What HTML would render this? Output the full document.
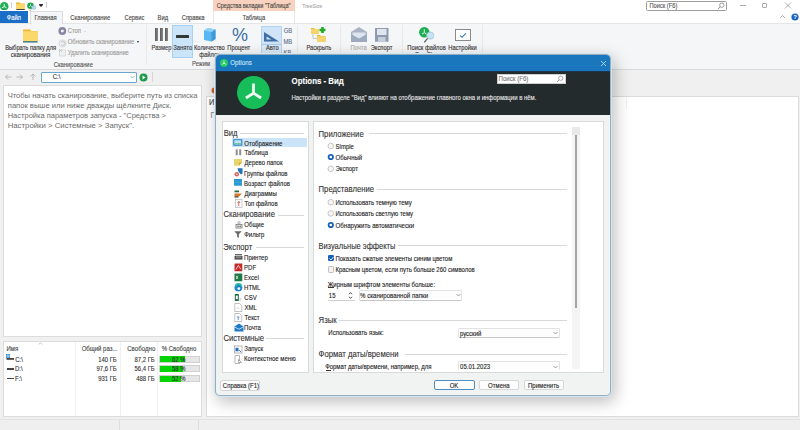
<!DOCTYPE html>
<html><head><meta charset="utf-8">
<style>
*{box-sizing:border-box}
body{margin:0;width:800px;height:430px;position:relative;overflow:hidden;background:#f0f0f0;font-family:"Liberation Sans",sans-serif;color:#222}
.a{position:absolute}
.t{position:absolute;white-space:nowrap;line-height:10px;height:10px;transform:scaleY(1.14);-webkit-text-stroke:0.1px currentColor}
</style></head><body>
<!-- top white area -->
<div class="a" style="left:0;top:0;width:800px;height:23px;background:#fff"></div>
<!-- title row icons -->
<svg class="a" style="left:0;top:1.5px" width="8.5" height="8.5" viewBox="-100 -100 200 200"><circle r="100" fill="#1fae55"/><path d="M0 -58 V6 L-52 36 M0 6 L52 36" stroke="#fff" stroke-width="22" fill="none"/></svg>
<div class="a" style="left:11px;top:2px;width:1px;height:6px;background:#d0d0d0"></div>
<svg class="a" style="left:16px;top:2px" width="9" height="8" viewBox="0 0 9 8"><path d="M0 .5h3.5l1 1H9V7H0z" fill="#f2b630"/><rect x="0" y="2" width="9" height="5" fill="#fcd86a"/><rect x="0.3" y="7" width="8.4" height="1" fill="#444"/></svg>
<svg class="a" style="left:27px;top:2px" width="10" height="9" viewBox="0 0 10 9"><circle cx="3.5" cy="3.7" r="3.3" fill="#1aa553"/><path d="M3.5 1.8v2l-1.4 1M3.5 3.8l1.4 1" stroke="#dfd" stroke-width=".7" fill="none"/><circle cx="6.8" cy="5.6" r="2" fill="#b8d8ea" stroke="#8ab3cf" stroke-width=".5"/><path d="M4 7.5L3 8.8" stroke="#444" stroke-width=".6"/></svg>
<div class="a" style="left:38.5px;top:3.7px;width:4px;height:.8px;background:#333"></div>
<div class="a" style="left:38.5px;top:5px;width:0;height:0;border-left:2px solid transparent;border-right:2px solid transparent;border-top:2.5px solid #222"></div>
<div class="a" style="left:46px;top:2px;width:1px;height:6px;background:#d0d0d0"></div>
<!-- context tab header -->
<div class="a" style="left:213px;top:0;width:82px;height:10.7px;background:#f8d2bf"></div>
<div class="a" style="left:213px;top:10.7px;width:82px;height:12.3px;background:#fff;border-left:1px solid #e6e6e6;border-right:1px solid #e6e6e6"></div>
<!-- search -->
<div class="a" style="left:646px;top:1px;width:81px;height:10px;border:1px solid #9c9c9c;border-radius:1.5px;background:#fff"></div>
<svg class="a" style="left:717px;top:2px" width="8" height="8" viewBox="0 0 8 8"><circle cx="4.8" cy="3.2" r="2.2" fill="none" stroke="#777" stroke-width=".7"/><path d="M3.2 4.8L1 7" stroke="#777" stroke-width=".8"/></svg>
<!-- window controls -->
<div class="a" style="left:740px;top:5px;width:6px;height:1px;background:#aaa"></div>
<div class="a" style="left:762px;top:3px;width:5px;height:5px;border:1px solid #aaa;border-radius:1px"></div>
<svg class="a" style="left:784px;top:2px" width="8" height="7" viewBox="0 0 8 7"><path d="M1 .5L7 6.5M7 .5L1 6.5" stroke="#999" stroke-width=".8"/></svg>
<!-- tab row -->
<div class="a" style="left:0;top:11px;width:28px;height:12px;background:#1b6ec5"></div>
<svg class="a" style="left:779px;top:14px" width="7" height="5" viewBox="0 0 7 5"><path d="M1 4L3.5 1.5 6 4" stroke="#888" stroke-width=".7" fill="none"/></svg>
<svg class="a" style="left:791px;top:13px" width="8" height="8" viewBox="0 0 8 8"><circle cx="4" cy="4" r="3.6" fill="#1565c0"/><text x="4" y="6.3" font-size="6" font-weight="700" fill="#fff" text-anchor="middle" font-family="Liberation Sans">?</text></svg>
<!-- ribbon -->
<div class="a" style="left:0;top:23px;width:800px;height:47px;background:#f5f6f7;border-top:1px solid #e4e5e6;border-bottom:1px solid #d9dadb"></div>
<div class="a" style="left:30px;top:10.5px;width:33px;height:13.5px;background:#f5f6f7;border:1px solid #dadbdc;border-bottom:none"></div>
<!-- group separators -->
<div class="a" style="left:146px;top:25px;width:1px;height:40px;background:#e8e9ea"></div>
<div class="a" style="left:297px;top:25px;width:1px;height:40px;background:#e8e9ea"></div>
<div class="a" style="left:340px;top:25px;width:1px;height:40px;background:#e8e9ea"></div>
<div class="a" style="left:402px;top:25px;width:1px;height:40px;background:#e8e9ea"></div>
<div class="a" style="left:482px;top:25px;width:1px;height:40px;background:#e8e9ea"></div>
<!-- big folder -->
<svg class="a" style="left:23px;top:28.5px" width="15" height="14" viewBox="0 0 15 14"><path d="M0 .5h7l1.2 1.5H14.5V12.5H0z" fill="#f2b630"/><rect x="0" y="2.2" width="14.5" height="10" fill="#fcd86a"/><rect x="0" y="12.2" width="14.5" height="1.3" fill="#2a6f7f"/></svg>
<!-- stop / refresh / delete icons -->
<svg class="a" style="left:58px;top:27px" width="9" height="9" viewBox="0 0 9 9"><circle cx="4.3" cy="4" r="3.9" fill="#8986a4"/><rect x="3" y="2.7" width="2.6" height="2.6" fill="#f4f4f8" rx=".5"/></svg>
<div class="a" style="left:83.5px;top:30.5px;width:0;height:0;border-left:1.5px solid transparent;border-right:1.5px solid transparent;border-top:1.5px solid #bbb"></div>
<svg class="a" style="left:58px;top:38.5px" width="9" height="9" viewBox="0 0 9 9"><circle cx="4.5" cy="4.5" r="3.6" fill="#eef0f2" stroke="#c8cacc" stroke-width=".6"/><path d="M3 3.5a2 2 0 1 1 0 2" stroke="#aaa" stroke-width=".6" fill="none"/></svg>
<div class="a" style="left:136.5px;top:40.7px;width:0;height:0;border-left:1.7px solid transparent;border-right:1.7px solid transparent;border-top:2px solid #222"></div>
<svg class="a" style="left:58px;top:48px" width="9" height="9" viewBox="0 0 9 9"><rect x="1.5" y="2" width="6" height="6" fill="#eef0f2" stroke="#c8cacc" stroke-width=".6"/><path d="M1 1l3 3M4 1L1 4" stroke="#bbb" stroke-width=".6"/></svg>
<!-- Размер bars -->
<div class="a" style="left:154.5px;top:28px;width:3.3px;height:12.5px;background:linear-gradient(90deg,#5a5a5a,#8a8a8a)"></div>
<div class="a" style="left:159.5px;top:28px;width:3.3px;height:12.5px;background:linear-gradient(90deg,#5a5a5a,#8a8a8a)"></div>
<div class="a" style="left:164.5px;top:28px;width:3.3px;height:12.5px;background:linear-gradient(90deg,#5a5a5a,#8a8a8a)"></div>
<!-- Занято selected -->
<div class="a" style="left:172px;top:25px;width:21px;height:33px;background:#cce4f7;border:1px solid #a8d0f0"></div>
<div class="a" style="left:175.5px;top:34.5px;width:13.5px;height:3.5px;background:#2f3a36;border-radius:.5px"></div>
<!-- cube -->
<svg class="a" style="left:203.5px;top:28px" width="12" height="14" viewBox="0 0 12 14"><path d="M0 2.5L4 0 11.5 1.5V11L7.5 13.5 0 12z" fill="#5ab6f0"/><path d="M7.5 4V13.5L11.5 11V1.5z" fill="#3d9ad8"/><path d="M0 2.5L4 0 11.5 1.5 7.5 4z" fill="#8fd0f8"/></svg>
<!-- percent -->
<svg class="a" style="left:232px;top:27.5px" width="16" height="14" viewBox="0 0 16 14"><text x="8" y="13.2" font-size="18" font-weight="400" fill="#3a6ea5" text-anchor="middle" font-family="Liberation Sans">%</text></svg>
<!-- Авто split -->
<div class="a" style="left:261px;top:25.5px;width:21px;height:19px;background:#cfe4f6;border:1px solid #b3d3ee"></div>
<div class="a" style="left:261px;top:44px;width:21px;height:12px;background:#d8e9f7;border:1px solid #b3d3ee;border-top:1px solid #a9cbe9"></div>
<svg class="a" style="left:263.5px;top:31.5px" width="15" height="10" viewBox="0 0 15 10"><path d="M0 0V9.5H15z" fill="#3f6ea8"/><path d="M2.5 4.5V7.5H7.5z" fill="#cfe4f6"/></svg>
<!-- раскрыть -->
<svg class="a" style="left:311px;top:26.5px" width="16" height="16" viewBox="0 0 16 16"><path d="M0 1h3l1 1h4v5H0z" fill="#e9b83a"/><rect x="0" y="2" width="8" height="5" fill="#f6d26a"/><path d="M2 7v4.5h4" stroke="#aaa" stroke-width=".6" fill="none"/><path d="M6 8h3l1 1h4.5v6H6z" fill="#e9b83a"/><rect x="6" y="9.3" width="8.5" height="5.7" fill="#f6d26a"/><path d="M8.5 3h6M11.5 0v6" stroke="#22aa22" stroke-width="2.6"/></svg>
<!-- почта -->
<svg class="a" style="left:351px;top:27px" width="16" height="15" viewBox="0 0 16 15"><path d="M0 5L8 0 16 5V15H0z" fill="#aab4c6"/><path d="M1.5 5.5H14.5V9L8 12.5 1.5 9z" fill="#dfe5ee"/><path d="M0 7L8 11.5 16 7V15H0z" fill="#9eaabe"/></svg>
<!-- экспорт floppy -->
<svg class="a" style="left:374.5px;top:28px" width="14" height="14" viewBox="0 0 14 14"><rect x="0" y="0" width="13.5" height="13.8" fill="#8e9aae" rx=".6"/><rect x="2" y="1" width="9.5" height="6" fill="#dfe6f0"/><rect x="3" y="9" width="7.5" height="4.8" fill="#c5cfdc"/></svg>
<!-- поиск в treesize -->
<svg class="a" style="left:418px;top:26.5px" width="18" height="17" viewBox="0 0 18 17"><circle cx="6.3" cy="5.3" r="5.2" fill="#1fae55"/><path d="M6.3 2.3v3.3l-2.3 1.5M6.3 5.6l2.3 1.5" stroke="#dff5e6" stroke-width="1" fill="none"/><circle cx="12.3" cy="8.6" r="3.6" fill="#c6e2f3" stroke="#9cc3dc" stroke-width=".7"/><path d="M9.6 11.3L6.3 15.3" stroke="#555" stroke-width="1.1"/></svg>
<!-- настройки checkbox -->
<div class="a" style="left:455px;top:29px;width:16px;height:12px;background:#fff;border:1px solid #8a8a8a"></div>
<svg class="a" style="left:459px;top:31.5px" width="8" height="7" viewBox="0 0 8 7"><path d="M1.2 3.6L3 5.3 6.8 1.4" stroke="#2a78b4" stroke-width="1.1" fill="none"/></svg>
<!-- small dropdown arrows -->
<div class="a" style="left:317.5px;top:52.5px;width:0;height:0;border-left:1.5px solid transparent;border-right:1.5px solid transparent;border-top:1.8px solid #333"></div>
<div class="a" style="left:380px;top:52.5px;width:0;height:0;border-left:1.5px solid transparent;border-right:1.5px solid transparent;border-top:1.8px solid #333"></div>
<div class="a" style="left:270px;top:52.5px;width:0;height:0;border-left:1.5px solid transparent;border-right:1.5px solid transparent;border-top:1.8px solid #333"></div>
<div class="a" style="left:461px;top:52.5px;width:0;height:0;border-left:1.5px solid transparent;border-right:1.5px solid transparent;border-top:1.8px solid #333"></div>
<div class="a" style="left:441px;top:53.5px;width:0;height:0;border-left:1.5px solid transparent;border-right:1.5px solid transparent;border-top:1.8px solid #333"></div>

<!-- address row -->
<svg class="a" style="left:4px;top:73px" width="34" height="8" viewBox="0 0 34 8"><path d="M1.5 4h6M1.5 4L4 1.5M1.5 4L4 6.5" stroke="#aaa" stroke-width=".8" fill="none"/><path d="M12.5 4h6M18.5 4L16 1.5M18.5 4L16 6.5" stroke="#aaa" stroke-width=".8" fill="none"/><path d="M29 7V1M29 1L26.5 3.5M29 1L31.5 3.5" stroke="#aaa" stroke-width=".8" fill="none"/></svg>
<div class="a" style="left:40.5px;top:71.5px;width:96px;height:11px;background:#fff;border:1px solid #6aa6cf;border-radius:1px"></div>
<svg class="a" style="left:130px;top:75px" width="5" height="4" viewBox="0 0 5 4"><path d="M.5 1L2.5 3 4.5 1" stroke="#777" stroke-width=".6" fill="none"/></svg>
<svg class="a" style="left:139px;top:72.5px" width="9" height="9" viewBox="0 0 9 9"><circle cx="4.5" cy="4.5" r="4" fill="#1f9a4c"/><path d="M3.5 2.5V6.5L6.6 4.5z" fill="#fff"/></svg>
<div class="a" style="left:152px;top:72px;width:1px;height:10px;background:#d6d6d6"></div>

<!-- left text panel -->
<div class="a" style="left:3px;top:85px;width:199px;height:252px;background:#fff;border:1px solid #dcdcdc"></div>
<!-- drive list panel -->
<div class="a" style="left:3px;top:341px;width:199px;height:76px;background:#fff;border:1px solid #dcdcdc"></div>
<svg class="a" style="left:38px;top:342px" width="5" height="3" viewBox="0 0 5 3"><path d="M.5 2.5L2.5 .8 4.5 2.5" stroke="#999" stroke-width=".5" fill="none"/></svg>
<div class="a" style="left:75px;top:342px;width:1px;height:74px;background:#f0f0f0"></div>
<div class="a" style="left:120px;top:342px;width:1px;height:74px;background:#f0f0f0"></div>
<div class="a" style="left:157px;top:342px;width:1px;height:74px;background:#f0f0f0"></div>
<!-- drive icons -->
<svg class="a" style="left:6px;top:354px" width="9" height="8" viewBox="0 0 9 8"><rect x="0" y="0" width="4" height="4" fill="#3b8fd1"/><path d="M0 2h4M2 0v4" stroke="#fff" stroke-width=".5"/><rect x="0.5" y="4" width="7.5" height="1.8" fill="#444"/></svg>
<div class="a" style="left:6.5px;top:367.8px;width:7.5px;height:1.8px;background:#444"></div>
<div class="a" style="left:6.5px;top:377.7px;width:7.5px;height:1.8px;background:#444"></div>
<!-- progress bars -->
<div class="a" style="left:159px;top:355.5px;width:40.5px;height:7px;background:#e6e6e6;border:1px solid #d0d0d0"></div>
<div class="a" style="left:159.5px;top:356px;width:25px;height:6px;background:#06d406"></div>
<div class="a" style="left:159px;top:365.4px;width:40.5px;height:7px;background:#e6e6e6;border:1px solid #d0d0d0"></div>
<div class="a" style="left:159.5px;top:365.9px;width:23.5px;height:6px;background:#06d406"></div>
<div class="a" style="left:159px;top:375.3px;width:40.5px;height:7px;background:#e6e6e6;border:1px solid #d0d0d0"></div>
<div class="a" style="left:159.5px;top:375.8px;width:21px;height:6px;background:#06d406"></div>
<!-- right big panel -->
<div class="a" style="left:206px;top:96px;width:593px;height:321px;background:#fff;border:1px solid #dcdcdc"></div>
<div class="a" style="left:626px;top:97px;width:1px;height:12px;background:#eee"></div>
<svg class="a" style="left:211px;top:87px" width="6" height="7" viewBox="0 0 6 7"><circle cx="3.5" cy="3.5" r="3" fill="#d2622a"/></svg>
<!-- status bar -->
<div class="a" style="left:0;top:419px;width:800px;height:11px;background:#efefef;border-top:1px solid #e2e2e2"></div>
<div class="a" style="left:119px;top:420px;width:1px;height:10px;background:#dedede"></div>
<div class="a" style="left:198px;top:420px;width:1px;height:10px;background:#dedede"></div>

<div class="t" style="left:216.72px;top:0.50px;font-size:5.56px;color:#444;">Средства вкладки "Таблица"</div>
<div class="t" style="left:302.30px;top:1.00px;font-size:5.03px;color:#aaa;">TreeSize</div>
<div class="t" style="left:649.54px;top:0.50px;font-size:5.70px;color:#555;">Поиск (F6)</div>
<div class="t" style="left:6.75px;top:12.80px;font-size:5.80px;color:#fff;">Файл</div>
<div class="t" style="left:34.54px;top:12.50px;font-size:5.80px;color:#444;z-index:3">Главная</div>
<div class="t" style="left:70.30px;top:12.50px;font-size:5.96px;color:#444;">Сканирование</div>
<div class="t" style="left:124.46px;top:12.50px;font-size:5.80px;color:#444;">Сервис</div>
<div class="t" style="left:157.54px;top:12.50px;font-size:5.80px;color:#444;">Вид</div>
<div class="t" style="left:181.71px;top:12.50px;font-size:5.80px;color:#444;">Справка</div>
<div class="t" style="left:242.38px;top:12.50px;font-size:5.80px;color:#444;">Таблица</div>
<div class="t" style="left:5.14px;top:43.25px;font-size:5.76px;color:#333;">Выбрать папку для</div>
<div class="t" style="left:10.65px;top:49.60px;font-size:6.13px;color:#333;">сканирования</div>
<div class="t" style="left:67.71px;top:26.00px;font-size:5.80px;color:#999;">Стоп</div>
<div class="t" style="left:67.70px;top:37.20px;font-size:5.92px;color:#999;">Обновить сканирование</div>
<div class="t" style="left:67.83px;top:48.00px;font-size:5.78px;color:#999;">Удалить сканирование</div>
<div class="t" style="left:53.71px;top:59.70px;font-size:5.85px;color:#555;">Сканирование</div>
<div class="t" style="left:151.54px;top:43.00px;font-size:5.80px;color:#333;">Размер</div>
<div class="t" style="left:173.27px;top:43.00px;font-size:5.80px;color:#333;">Занято</div>
<div class="t" style="left:194.04px;top:43.00px;font-size:5.71px;color:#333;">Количество</div>
<div class="t" style="left:199.27px;top:49.50px;font-size:5.80px;color:#333;">файлов</div>
<div class="t" style="left:227.34px;top:43.00px;font-size:5.80px;color:#333;">Процент</div>
<div class="t" style="left:266.00px;top:43.00px;font-size:5.80px;color:#333;">Авто</div>
<div class="t" style="left:283.71px;top:26.00px;font-size:5.80px;color:#5a6f8a;">GB</div>
<div class="t" style="left:283.54px;top:37.00px;font-size:5.80px;color:#5a6f8a;">MB</div>
<div class="t" style="left:283.54px;top:48.00px;font-size:5.80px;color:#5a6f8a;">KB</div>
<div class="t" style="left:192.04px;top:59.40px;font-size:5.80px;color:#555;">Режим</div>
<div class="t" style="left:306.55px;top:43.00px;font-size:5.63px;color:#333;">Раскрыть</div>
<div class="t" style="left:350.54px;top:43.00px;font-size:5.80px;color:#aaa;">Почта</div>
<div class="t" style="left:370.65px;top:43.00px;font-size:5.80px;color:#333;">Экспорт</div>
<div class="t" style="left:407.29px;top:43.00px;font-size:5.79px;color:#333;">Поиск файлов</div>
<div class="t" style="left:410.59px;top:49.50px;font-size:5.80px;color:#333;">в TreeSize</div>
<div class="t" style="left:448.29px;top:43.00px;font-size:5.80px;color:#333;">Настройки</div>
<div class="t" style="left:7.70px;top:90.50px;font-size:7.55px;color:#6b6b6b;transform:scaleY(1.04);-webkit-text-stroke:0">Чтобы начать сканирование, выберите путь из списка</div>
<div class="t" style="left:7.77px;top:100.50px;font-size:7.60px;color:#6b6b6b;transform:scaleY(1.04);-webkit-text-stroke:0">папок выше или ниже дважды щёлкните Диск.</div>
<div class="t" style="left:7.70px;top:110.50px;font-size:7.50px;color:#6b6b6b;transform:scaleY(1.04);-webkit-text-stroke:0">Настройка параметров запуска - "Средства &gt;</div>
<div class="t" style="left:7.68px;top:120.50px;font-size:7.79px;color:#6b6b6b;transform:scaleY(1.04);-webkit-text-stroke:0">Настройки &gt; Системные &gt; Запуск".</div>
<div class="t" style="left:52.70px;top:72.00px;font-size:6.00px;color:#333;">C:\</div>
<div class="t" style="left:6.52px;top:343.75px;font-size:6.00px;color:#444;">Имя</div>
<div class="t" style="left:81.70px;top:343.75px;font-size:6.01px;color:#444;">Общий раз...</div>
<div class="t" style="left:127.19px;top:343.75px;font-size:6.11px;color:#444;">Свободно</div>
<div class="t" style="left:161.76px;top:343.75px;font-size:5.99px;color:#444;">% Свободно</div>
<div class="t" style="left:15.20px;top:354.50px;font-size:6.00px;color:#333;">C:\</div>
<div class="t" style="right:683.26px;top:354.50px;font-size:5.90px;color:#333;">140 ГБ</div>
<div class="t" style="right:645.26px;top:354.50px;font-size:5.90px;color:#333;">87,2 ГБ</div>
<div class="t" style="right:611.26px;top:354.50px;font-size:5.90px;color:#333;text-align:center;width:20px;margin-left:0">62 %</div>
<div class="t" style="left:15.02px;top:364.40px;font-size:6.00px;color:#333;">D:\</div>
<div class="t" style="right:683.26px;top:364.40px;font-size:5.90px;color:#333;">97,6 ГБ</div>
<div class="t" style="right:645.26px;top:364.40px;font-size:5.90px;color:#333;">56,4 ГБ</div>
<div class="t" style="right:611.26px;top:364.40px;font-size:5.90px;color:#333;text-align:center;width:20px;margin-left:0">58 %</div>
<div class="t" style="left:15.02px;top:374.30px;font-size:6.00px;color:#333;">F:\</div>
<div class="t" style="right:683.26px;top:374.30px;font-size:5.90px;color:#333;">931 ГБ</div>
<div class="t" style="right:645.26px;top:374.30px;font-size:5.90px;color:#333;">488 ГБ</div>
<div class="t" style="right:611.26px;top:374.30px;font-size:5.90px;color:#333;text-align:center;width:20px;margin-left:0">52 %</div>
<div class="t" style="left:208.90px;top:97.50px;font-size:7.50px;color:#444;">И</div>
<div class="t" style="left:210.40px;top:111.00px;font-size:7.50px;color:#888;">П</div>
<!-- DIALOG -->
<div class="a" style="left:214px;top:53px;width:398px;height:344px;border-radius:6px;box-shadow:3px 5px 16px rgba(0,0,0,.26);background:#d3e7f3"></div>
<div class="a" style="left:215px;top:54px;width:396px;height:342px;border-radius:5px;background:#94adbf"></div>
<div class="a" style="left:216px;top:55px;width:394px;height:340px;background:#f1f2f2;border-radius:4px;overflow:hidden"><div class="a" style="left:-1px;top:0;width:395px;height:340px">
  <div class="a" style="left:0;top:0;width:395px;height:16px;background:#1a76bd"></div>
  <div class="a" style="left:0;top:16px;width:395px;height:44px;background:#232b2d"></div><div class="a" style="left:0;top:15.5px;width:395px;height:1px;background:#1b3550"></div>
  <svg class="a" style="left:5px;top:3.5px" width="8" height="8" viewBox="-100 -100 200 200"><circle r="100" fill="#22cc60"/><path d="M0 -58 V6 L-52 36 M0 6 L52 36" stroke="#fff" stroke-width="20" fill="none"/></svg>
  <svg class="a" style="left:384.5px;top:4.5px" width="7" height="7" viewBox="0 0 7 7"><path d="M1 1L6 6M6 1L1 6" stroke="#c8e4f7" stroke-width=".8"/></svg>
  <svg class="a" style="left:22px;top:21px" width="33" height="33" viewBox="-100 -100 200 200"><circle r="100" fill="#17bd58"/><path d="M0 -54 V4 L-46 33 M0 4 L46 33" stroke="#eefaf2" stroke-width="17" fill="none"/></svg>
  <!-- search box -->
  <div class="a" style="left:282px;top:18.5px;width:69px;height:10.5px;background:#fff;border:1px solid #cfcfcf"></div>
  <svg class="a" style="left:341px;top:20px" width="8" height="8" viewBox="0 0 8 8"><circle cx="4.8" cy="3.2" r="2.2" fill="none" stroke="#888" stroke-width=".7"/><path d="M3.2 4.8L1 7" stroke="#888" stroke-width=".8"/></svg>
  <!-- left list -->
  <div class="a" style="left:7px;top:66px;width:87px;height:252px;background:#fff;border:1px solid #dadada"></div>
  <div class="a" style="left:25px;top:77.5px;width:64px;height:1px;background:#d8d8d8"></div>
  <div class="a" style="left:17px;top:83.3px;width:75px;height:8.7px;background:#cce4f7"></div>
  <div class="a" style="left:63px;top:159.5px;width:26px;height:1px;background:#d8d8d8"></div>
  <div class="a" style="left:41px;top:192px;width:48px;height:1px;background:#d8d8d8"></div>
  <div class="a" style="left:51px;top:283px;width:38px;height:1px;background:#d8d8d8"></div>
  <!-- right content -->
  <div class="a" style="left:98px;top:66px;width:291px;height:252px;background:#fff;border:1px solid #dadada"></div>
  <div class="a" style="left:153.5px;top:78px;width:198px;height:1px;background:#d8d8d8"></div>
  <div class="a" style="left:162px;top:133.5px;width:190px;height:1px;background:#d8d8d8"></div>
  <div class="a" style="left:183px;top:190px;width:169px;height:1px;background:#d8d8d8"></div>
  <div class="a" style="left:124px;top:264.7px;width:228px;height:1px;background:#d8d8d8"></div>
  <div class="a" style="left:190px;top:299.4px;width:162px;height:1px;background:#d8d8d8"></div>
  <!-- scrollbar -->
  <div class="a" style="left:357px;top:72px;width:8px;height:242px;background:#f4f4f4"></div>
  <div class="a" style="left:357px;top:72px;width:8px;height:7.5px;background:#e9e9e9;border-radius:1px"></div>
  <div class="a" style="left:359.5px;top:79.5px;width:2.8px;height:173px;background:#a3a3a3"></div>
  <!-- buttons -->
  <div class="a" style="left:4.5px;top:325px;width:40.5px;height:10.7px;background:#fdfdfd;border:1px solid #d6d6d6;border-radius:2px"></div>
  <div class="a" style="left:218.5px;top:324.8px;width:41px;height:10.6px;background:#fdfdfd;border:1px solid #4c8fc4;border-radius:2px"></div>
  <div class="a" style="left:263.7px;top:324.8px;width:40px;height:10.6px;background:#fdfdfd;border:1px solid #d6d6d6;border-radius:2px"></div>
  <div class="a" style="left:308.8px;top:324.8px;width:40.5px;height:10.6px;background:#fdfdfd;border:1px solid #d6d6d6;border-radius:2px"></div>
</div></div>
<!-- dialog controls in page coords -->
<!-- radios -->
<svg class="a" style="left:326px;top:141px" width="10" height="90" viewBox="0 0 10 90">
 <g fill="#f6f6f6" stroke="#a5a5a5" stroke-width=".6">
  <circle cx="4.8" cy="5" r="2.8"/><circle cx="4.8" cy="27.8" r="2.8"/><circle cx="4.8" cy="61.2" r="2.8"/><circle cx="4.8" cy="72.4" r="2.8"/>
 </g>
 <circle cx="4.8" cy="16" r="3.1" fill="#1a62b8"/><circle cx="4.8" cy="16" r="1.3" fill="#fff"/>
 <circle cx="4.8" cy="84" r="3.1" fill="#1a62b8"/><circle cx="4.8" cy="84" r="1.3" fill="#fff"/>
</svg>
<!-- checkboxes -->
<div class="a" style="left:327.5px;top:254.6px;width:6.8px;height:6.8px;background:#1a62b8;border-radius:1.2px"></div>
<svg class="a" style="left:327.5px;top:254.6px" width="7" height="7" viewBox="0 0 7 7"><path d="M1.4 3.5L2.9 5 5.6 1.9" stroke="#fff" stroke-width=".85" fill="none"/></svg>
<div class="a" style="left:327.5px;top:266.4px;width:6.8px;height:6.8px;background:#f3f3f3;border:.6px solid #bdbdbd;border-radius:1.2px"></div>
<!-- spin + combos -->
<div class="a" style="left:328px;top:289.5px;width:26.5px;height:11px;background:#fff;border-bottom:1px solid #cfcfcf"></div>
<svg class="a" style="left:347.5px;top:290.5px" width="5" height="9" viewBox="0 0 5 9"><path d="M1 3.2L2.5 1.6 4 3.2M1 5.8L2.5 7.4 4 5.8" stroke="#333" stroke-width=".9" fill="none"/></svg>
<div class="a" style="left:358.5px;top:289.5px;width:103px;height:11px;background:#fdfdfd;border:1px solid #e2e2e2;border-bottom-color:#c8c8c8;border-radius:1.5px"></div>
<svg class="a" style="left:455.5px;top:293px" width="5" height="4" viewBox="0 0 5 4"><path d="M.5 1L2.5 3 4.5 1" stroke="#666" stroke-width=".6" fill="none"/></svg>
<div class="a" style="left:458px;top:327.5px;width:101.5px;height:10.8px;background:#fdfdfd;border:1px solid #e2e2e2;border-bottom-color:#c8c8c8;border-radius:1.5px"></div>
<svg class="a" style="left:553px;top:331px" width="5" height="4" viewBox="0 0 5 4"><path d="M.5 1L2.5 3 4.5 1" stroke="#666" stroke-width=".6" fill="none"/></svg>
<div class="a" style="left:458px;top:361.3px;width:101.5px;height:9px;background:#fdfdfd;border:1px solid #e2e2e2;border-bottom:none;border-radius:1.5px 1.5px 0 0"></div>
<svg class="a" style="left:553px;top:364.5px" width="5" height="4" viewBox="0 0 5 4"><path d="M.5 1L2.5 3 4.5 1" stroke="#666" stroke-width=".6" fill="none"/></svg>
<!-- list icons -->
<svg class="a" style="left:233px;top:138.5px" width="10" height="8" viewBox="0 0 10 8"><rect x=".3" y=".3" width="9" height="6.4" fill="#1f78c8"/><rect x="1.3" y="1.2" width="7" height="4.4" fill="#bfe3f5"/><rect x="1.3" y="4" width="7" height="1.6" fill="#7cc4a8"/></svg>
<svg class="a" style="left:234.5px;top:149px" width="8" height="7" viewBox="0 0 8 7"><rect x=".7" y=".3" width="2" height="6" fill="#8f8f8f"/><rect x="4.2" y=".3" width="2" height="6" fill="#8f8f8f"/></svg>
<svg class="a" style="left:234px;top:158.8px" width="9" height="7" viewBox="0 0 9 7"><path d="M0 0H8V3.5L4.8 6.7H0z" fill="#ead46c"/><path d="M4.8 6.7V3.5H8z" fill="#c9b04a"/></svg>
<svg class="a" style="left:233.5px;top:167.8px" width="9" height="9" viewBox="0 0 9 9"><path d="M3.5 .3H8.5V5.5L7 6.5 4.5 3.8z" fill="#1f72b8"/><circle cx="2.8" cy="6.3" r="2.3" fill="#d86a66"/><circle cx="2.8" cy="6.3" r=".8" fill="#f6dede"/></svg>
<svg class="a" style="left:234px;top:179px" width="9" height="7" viewBox="0 0 9 7"><rect x="0" y="0" width="8" height="6.7" fill="#2a98d2"/><rect x="0" y="3" width="8" height=".5" fill="#5bb8e8"/></svg>
<svg class="a" style="left:234px;top:188.5px" width="9" height="9" viewBox="0 0 9 9"><rect x=".5" y="1.5" width="4.5" height="1.8" fill="#2a6a3a"/><path d="M.5 4.5H8L5 7.5H.5z" fill="#d8762a"/><rect x=".5" y="7.3" width="4" height="1.2" fill="#4a3a2a"/></svg>
<svg class="a" style="left:234.5px;top:198.5px" width="8" height="9" viewBox="0 0 8 9"><rect x=".5" y=".5" width="6.5" height="8" fill="#fff" stroke="#aaa" stroke-width=".6"/><path d="M3.75 7V2.5M2.5 4L3.75 2.5 5 4" stroke="#d24a3a" stroke-width=".8" fill="none"/></svg>
<svg class="a" style="left:234.5px;top:221px" width="9" height="8" viewBox="0 0 9 8"><rect x="1" y="3.5" width="6" height="3.5" fill="#eee" stroke="#777" stroke-width=".8"/><circle cx="4" cy="1.8" r="1.2" fill="none" stroke="#888" stroke-width=".7"/><circle cx="3" cy="5.3" r=".8" fill="#666"/><circle cx="5.2" cy="5.3" r=".8" fill="#666"/></svg>
<svg class="a" style="left:234px;top:231px" width="9" height="7" viewBox="0 0 9 7"><path d="M.3 .2H7.7L4.9 3.2V6.7L3.1 6V3.2z" fill="#6a6a6a"/></svg>
<svg class="a" style="left:234px;top:253px" width="9" height="8" viewBox="0 0 9 8"><rect x="1" y="1" width="7" height="1.4" fill="#666"/><rect x=".5" y="3" width="8" height="3.6" fill="#555"/><rect x="2" y="3.6" width="5" height="1" fill="#aaa"/></svg>
<svg class="a" style="left:234px;top:263px" width="9" height="9" viewBox="0 0 9 9"><rect x=".5" y=".5" width="7.8" height="7.8" fill="#c62828" rx=".5"/><path d="M2 6.5L4.3 2.3 6.8 6.2" stroke="#fff" stroke-width=".7" fill="none"/></svg>
<svg class="a" style="left:234px;top:273px" width="9" height="9" viewBox="0 0 9 9"><rect x=".5" y=".5" width="7.8" height="7.8" fill="#1d7a45" rx=".5"/><path d="M2.2 2.8L4 6M4 2.8L2.2 6" stroke="#fff" stroke-width=".7"/></svg>
<svg class="a" style="left:234px;top:283px" width="9" height="9" viewBox="0 0 9 9"><circle cx="4.4" cy="4.4" r="3.9" fill="#1b84d4"/><path d="M1.5 3.5a3 3 0 0 1 6 .5" stroke="#38c1a0" stroke-width="1.4" fill="none"/><circle cx="4.8" cy="5.6" r="1.4" fill="#fff"/></svg>
<svg class="a" style="left:234px;top:293px" width="9" height="9" viewBox="0 0 9 9"><rect x=".8" y="1" width="4" height="7" fill="#1d6a45"/><rect x="1.8" y="2.6" width="2" height="3.6" fill="#fff"/><rect x="5.3" y="5" width="2" height="3" fill="#ddd"/></svg>
<svg class="a" style="left:234px;top:303px" width="9" height="9" viewBox="0 0 9 9"><path d="M.8 .5H5.5L7.8 2.8V8.5H.8z" fill="#fff" stroke="#999" stroke-width=".6"/><path d="M2.5 5h3" stroke="#aaa" stroke-width=".5"/></svg>
<svg class="a" style="left:234px;top:313px" width="9" height="9" viewBox="0 0 9 9"><path d="M.8 .5H5.5L7.8 2.8V8.5H.8z" fill="#fff" stroke="#999" stroke-width=".6"/><path d="M3 4h2.5M4.2 4v3" stroke="#1e6fc0" stroke-width=".7"/></svg>
<svg class="a" style="left:233.5px;top:323px" width="10" height="9" viewBox="0 0 10 9"><path d="M.5 3.5L5 .5 9.5 3.5V8.5H.5z" fill="#1e7ac8"/><path d="M.5 3.8L5 6.3 9.5 3.8" stroke="#fff" stroke-width=".7" fill="none"/></svg>
<svg class="a" style="left:234px;top:344.5px" width="9" height="9" viewBox="0 0 9 9"><rect x=".5" y="1" width="7.5" height="7" fill="#fff" stroke="#888" stroke-width=".6"/><rect x="1.5" y="2.8" width="3" height="3.5" fill="#1e6fc0"/><path d="M5 5l2 2" stroke="#1e6fc0" stroke-width=".9"/></svg>
<svg class="a" style="left:234px;top:354.5px" width="9" height="9" viewBox="0 0 9 9"><path d="M1 .5H5.5V8.5H1z" fill="#fff" stroke="#888" stroke-width=".6"/><path d="M4.5 4.5L7.5 7.5H4.5z" fill="#fff" stroke="#777" stroke-width=".6"/></svg>

<div class="a" style="left:328px;top:287.2px;width:5.5px;height:.6px;background:#333"></div>
<div class="a" style="left:325.8px;top:369.6px;width:5px;height:.6px;background:#333"></div>

<div class="t" style="left:230.19px;top:58.10px;font-size:6.28px;color:#cfe7f8;">Options</div>
<div class="t" style="left:291.58px;top:77.35px;font-size:7.88px;color:#ffffff;font-weight:700;">Options - Вид</div>
<div class="t" style="left:291.42px;top:93.40px;font-size:5.99px;color:#e8e8e8;">Настройки в разделе "Вид" влияют на отображение главного окна и информации в нём.</div>
<div class="t" style="left:498.51px;top:74.30px;font-size:6.12px;color:#777;">Поиск (F6)</div>
<div class="t" style="left:223.68px;top:128.70px;font-size:7.70px;color:#333;">Вид</div>
<div class="t" style="left:244.30px;top:138.60px;font-size:6.00px;color:#222;">Отображение</div>
<div class="t" style="left:244.48px;top:148.20px;font-size:6.00px;color:#222;">Таблица</div>
<div class="t" style="left:244.54px;top:158.30px;font-size:6.00px;color:#222;">Дерево папок</div>
<div class="t" style="left:244.12px;top:168.60px;font-size:6.00px;color:#222;">Группы файлов</div>
<div class="t" style="left:244.12px;top:178.60px;font-size:6.00px;color:#222;">Возраст файлов</div>
<div class="t" style="left:244.54px;top:188.60px;font-size:6.00px;color:#222;">Диаграммы</div>
<div class="t" style="left:244.48px;top:198.60px;font-size:6.00px;color:#222;">Топ файлов</div>
<div class="t" style="left:244.30px;top:220.40px;font-size:6.00px;color:#222;">Общие</div>
<div class="t" style="left:244.24px;top:230.40px;font-size:6.00px;color:#222;">Фильтр</div>
<div class="t" style="left:244.12px;top:252.60px;font-size:6.00px;color:#222;">Принтер</div>
<div class="t" style="left:244.12px;top:262.60px;font-size:6.00px;color:#222;">PDF</div>
<div class="t" style="left:244.12px;top:272.60px;font-size:6.00px;color:#222;">Excel</div>
<div class="t" style="left:244.12px;top:282.60px;font-size:6.00px;color:#222;">HTML</div>
<div class="t" style="left:244.30px;top:292.60px;font-size:6.00px;color:#222;">CSV</div>
<div class="t" style="left:244.42px;top:302.60px;font-size:6.00px;color:#222;">XML</div>
<div class="t" style="left:244.48px;top:312.60px;font-size:6.00px;color:#222;">Текст</div>
<div class="t" style="left:244.12px;top:322.60px;font-size:6.00px;color:#222;">Почта</div>
<div class="t" style="left:244.36px;top:344.40px;font-size:6.00px;color:#222;">Запуск</div>
<div class="t" style="left:244.12px;top:354.20px;font-size:6.00px;color:#222;">Контекстное меню</div>
<div class="t" style="left:223.42px;top:210.40px;font-size:7.70px;color:#333;">Сканирование</div>
<div class="t" style="left:223.34px;top:242.90px;font-size:7.70px;color:#333;">Экспорт</div>
<div class="t" style="left:223.42px;top:334.00px;font-size:7.70px;color:#333;">Системные</div>
<div class="t" style="left:222.80px;top:381.20px;font-size:6.00px;color:#222;">Справка (F1)</div>
<div class="t" style="left:318.58px;top:129.60px;font-size:7.70px;color:#333;">Приложение</div>
<div class="t" style="left:335.60px;top:141.60px;font-size:6.00px;color:#222;">Simple</div>
<div class="t" style="left:335.60px;top:152.60px;font-size:6.00px;color:#222;">Обычный</div>
<div class="t" style="left:335.54px;top:164.40px;font-size:6.00px;color:#222;">Экспорт</div>
<div class="t" style="left:318.58px;top:185.30px;font-size:7.70px;color:#333;">Представление</div>
<div class="t" style="left:335.42px;top:197.80px;font-size:6.02px;color:#222;">Использовать темную тему</div>
<div class="t" style="left:335.42px;top:209.00px;font-size:5.98px;color:#222;">Использовать светлую тему</div>
<div class="t" style="left:335.60px;top:220.60px;font-size:6.10px;color:#222;">Обнаружить автоматически</div>
<div class="t" style="left:318.40px;top:241.90px;font-size:7.50px;color:#333;">Визуальные эффекты</div>
<div class="t" style="left:335.42px;top:253.60px;font-size:5.97px;color:#222;">Показать сжатые элементы синим цветом</div>
<div class="t" style="left:335.42px;top:265.40px;font-size:5.98px;color:#222;">Красным цветом, если путь больше 260 символов</div>
<div class="t" style="left:327.68px;top:280.30px;font-size:6.07px;color:#222;">Жирным шрифтом элементы больше:</div>
<div class="t" style="left:328.82px;top:290.60px;font-size:6.00px;color:#222;">15</div>
<div class="t" style="left:360.05px;top:290.60px;font-size:6.14px;color:#222;">% сканированной папки</div>
<div class="t" style="left:318.62px;top:316.10px;font-size:7.70px;color:#333;">Язык</div>
<div class="t" style="left:328.32px;top:327.60px;font-size:6.06px;color:#222;">Использовать язык:</div>
<div class="t" style="left:459.88px;top:328.60px;font-size:6.00px;color:#222;">русский</div>
<div class="t" style="left:318.54px;top:350.20px;font-size:7.70px;color:#333;">Формат даты/времени</div>
<div class="t" style="left:325.14px;top:362.10px;font-size:5.99px;color:#222;">Формат даты/времени, например, для</div>
<div class="t" style="left:460.06px;top:361.90px;font-size:6.00px;color:#222;">05.01.2023</div>
<div class="t" style="left:449.70px;top:381.10px;font-size:6.00px;color:#222;">OK</div>
<div class="t" style="left:488.10px;top:381.10px;font-size:6.00px;color:#222;">Отмена</div>
<div class="t" style="left:528.02px;top:381.10px;font-size:6.00px;color:#222;">Применить</div>
</body></html>
